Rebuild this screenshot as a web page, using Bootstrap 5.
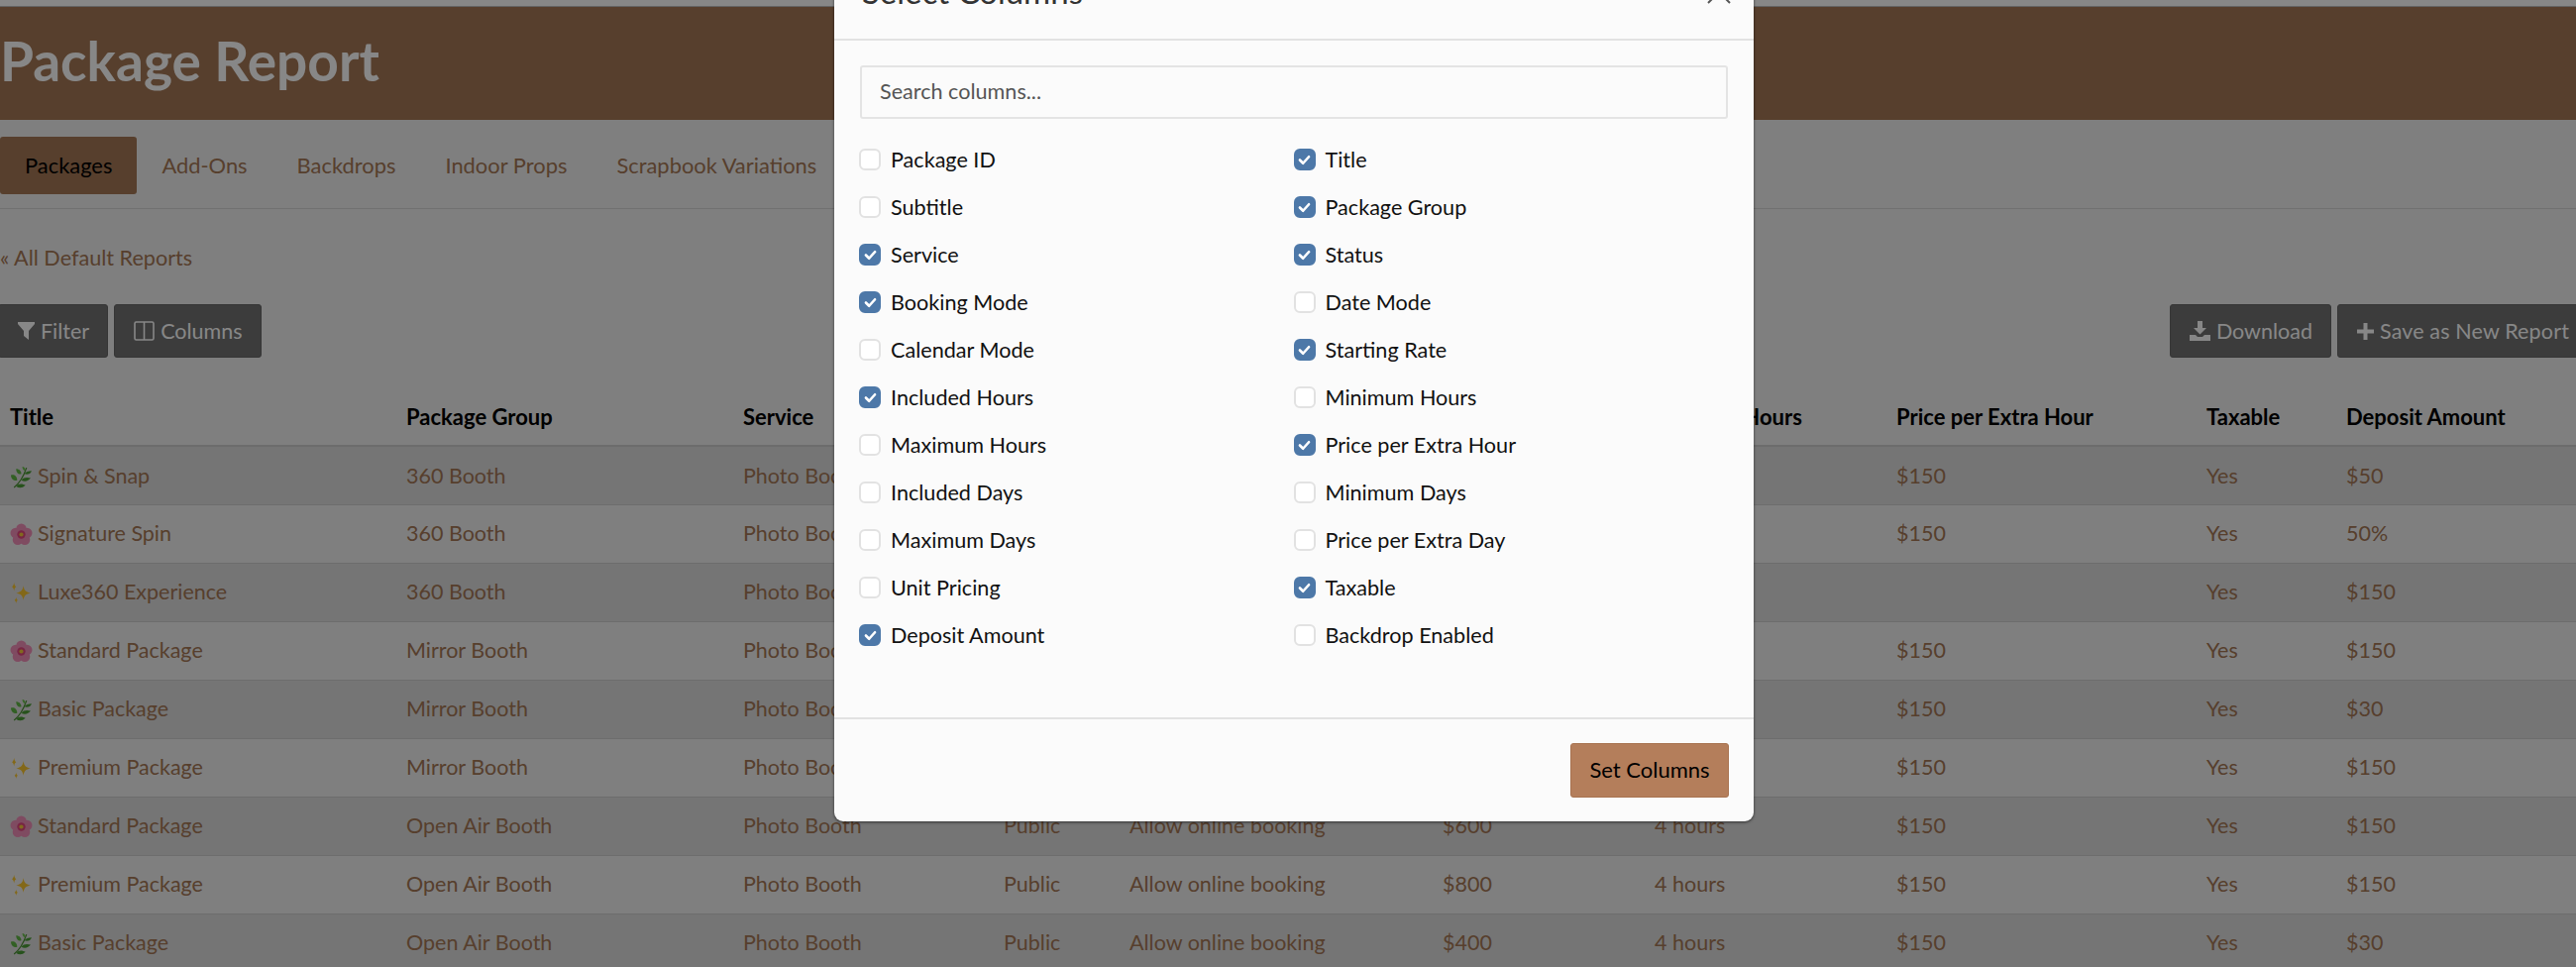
<!DOCTYPE html>
<html lang="en">

<head>
    <meta charset="UTF-8">
    <meta name="viewport" content="width=device-width, initial-scale=1.0">
    <title>Package Report</title>
    <link href="https://cdn.jsdelivr.net/npm/bootstrap@5.3.3/dist/css/bootstrap.min.css" rel="stylesheet">
    <script src="https://cdn.jsdelivr.net/npm/bootstrap@5.3.3/dist/js/bootstrap.bundle.min.js"></script>

    <style>
        html, body {
            height: 976px;
            overflow: hidden;
        }

        body {
            background-color: #f0f0f0;
            font-family: "Lato", "Liberation Sans", sans-serif;
            font-size: 21.6px;
            color: #a47755;
            padding-top: 6px;
            position: relative;
        }

        .top-strip {
            position: absolute;
            left: 0;
            right: 0;
            top: 0;
            height: 6px;
            background-color: #fff;
        }

        .report-band {
            background-color: #a47755;
            height: 115px;
            border-top: 1px solid #bbb;
        }

        .report-title {
            color: #fff;
            font-size: 55px;
            font-weight: 700;
            line-height: 108px;
            margin: 0;
        }

        .report-tabs {
            height: 90px;
            border-bottom: 1px solid #d6d6d6;
            padding-top: 17px;
        }

        .report-tabs .nav-link {
            height: 58px;
            padding: 0 25px;
            line-height: 58px;
            font-size: 21.9px;
            color: #a47755;
            border-radius: 3px;
        }

        .report-tabs .nav-link.active {
            background-color: #a47755;
            color: #000;
        }

        .back-link {
            display: block;
            color: #a47755;
            text-decoration: none;
            height: 96px;
            line-height: 98px;
        }

        .report-tools {
            margin: 0 -13px 0 -2px;
            height: 54px;
        }

        .tool-group {
            display: flex;
            gap: 6px;
        }

        .tool-btn {
            background-color: #717171;
            border: 1px solid #666;
            color: #fff;
            height: 54px;
            border-radius: 3px;
            font-size: 21.5px;
            padding: 0 18px 0 19px;
            display: flex;
            align-items: center;
            gap: 6px;
        }

        .tool-btn-wide {
            padding: 0 19px;
            letter-spacing: .15px;
        }

        .report-table {
            table-layout: fixed;
            width: 2600px;
            margin: 29px 0 0;
            --bs-table-bg: transparent;
            --bs-table-color: #a47755;
            --bs-table-striped-color: #a47755;
            --bs-table-striped-bg: rgba(0, 0, 0, .08);
            --bs-table-border-color: #cfcfcf;
        }

        .report-table th {
            color: #000;
            font-size: 22px;
            font-weight: 700;
            height: 60px;
            padding: 2px 10px 0;
            vertical-align: middle;
            border-bottom: 2px solid #cdcdcd;
        }

        .report-table td {
            height: 59px;
            padding: 0 10px;
            vertical-align: middle;
            white-space: nowrap;
            font-size: 21.5px;
        }

        .report-table th:nth-child(1) { width: 400px; }
        .report-table th:nth-child(2) { width: 340px; }
        .report-table th:nth-child(3) { width: 263px; }
        .report-table th:nth-child(4) { width: 127px; }
        .report-table th:nth-child(5) { width: 316px; }
        .report-table th:nth-child(6) { width: 214px; }
        .report-table th:nth-child(7) { width: 244px; }
        .report-table th:nth-child(8) { width: 313px; }
        .report-table th:nth-child(9) { width: 141px; }

        .emoji-icon {
            width: 23px;
            height: 23px;
            margin-right: 5px;
            vertical-align: -5px;
        }

        .dim-layer {
            position: absolute;
            inset: 0;
            background-color: #000;
            opacity: .47;
        }

        .columns-dialog {
            position: absolute;
            left: 842px;
            top: -34px;
            width: 928px;
            height: 863px;
            background-color: #fbfbfb;
            border-radius: 9px;
            box-shadow: 0 1px 3px rgba(0, 0, 0, .6);
            color: #111;
            display: flex;
            flex-direction: column;
        }

        .dialog-head {
            height: 75px;
            border-bottom: 2px solid #e2e2e2;
            padding: 5px 23px 0 28px;
            flex-shrink: 0;
        }

        .dialog-title {
            font-size: 33px;
            line-height: 40px;
            font-weight: 400;
            color: #333;
            margin: 0;
        }

        .dialog-close {
            padding: 0;
            border: 0;
            background: none;
            margin-top: 2px;
            display: block;
        }

        .dialog-body {
            padding: 25px 26px 0;
            flex-grow: 1;
        }

        .column-search {
            height: 54px;
            border: 2px solid #e4e4e4;
            border-radius: 3px;
            font-size: 21.6px;
            line-height: 50px;
            padding: 0 18px 2px;
            background-color: #fbfbfb;
            margin-bottom: 17px;
        }

        .column-search::placeholder {
            color: #555;
        }

        .column-list {
            margin-left: -1px;
        }

        .column-item {
            height: 48px;
            display: flex;
            align-items: center;
            gap: 10px;
            margin: 0;
            padding: 0;
        }

        .column-item .form-check-input {
            width: 22px;
            height: 22px;
            margin: 0;
            border: 2px solid #e2e2e2;
            border-radius: 6px;
            background-color: #fff;
            float: none;
            flex-shrink: 0;
        }

        .column-item .form-check-input:checked {
            background-color: #4d78a8;
            border-color: #4d78a8;
            background-size: 13px;
            --bs-form-check-bg-image: url("data:image/svg+xml,%3csvg xmlns='http://www.w3.org/2000/svg' viewBox='0 0 20 20'%3e%3cpath fill='none' stroke='%23fff' stroke-linecap='round' stroke-linejoin='round' stroke-width='4' d='m3 10 5 5 9-10'/%3e%3c/svg%3e");
        }

        .column-item .form-check-label {
            color: #111;
        }

        .dialog-foot {
            height: 105px;
            border-top: 2px solid #e2e2e2;
            padding: 0 25px;
            flex-shrink: 0;
        }

        .set-columns-btn {
            background-color: #b47e5b;
            border: 1px solid #a87350;
            color: #000;
            font-size: 22px;
            width: 160px;
            height: 55px;
            padding: 0 0 2px;
            border-radius: 3px;
        }
    </style>
</head>

<body>

    <svg width="0" height="0" class="d-none">
        <symbol id="ico-herb" viewBox="0 0 22 22">
            <path d="M4 21C9 17 13 11 16 2" fill="none" stroke="#4a8f33" stroke-width="1.200" />
            <path d="M1 9c3-1 6 1 6 5-3 1-6-1-6-5z" fill="#5fb544" />
            <path d="M6 3c3 0 5 2 5 5-3 1-5-2-5-5z" fill="#5fb544" />
            <path d="M12 1c2 0 3 2 3 4-2 0-3-2-3-4z" fill="#6cc04e" />
            <path d="M6 20c2-3 6-3 9-1-3 3-6 3-9 1z" fill="#4a9c36" />
            <path d="M11 14c2-3 6-3 9-2-2 3-6 4-9 2z" fill="#4a9c36" />
            <path d="M14 8c1-2 4-3 7-3-1 3-4 4-7 3z" fill="#4a9c36" />
        </symbol>
        <symbol id="ico-blossom" viewBox="0 0 22 22">
            <g fill="#f08fb8">
                <circle cx="11" cy="5.500" r="5" />
                <circle cx="16.500" cy="9.500" r="5" />
                <circle cx="14.400" cy="16" r="5" />
                <circle cx="7.600" cy="16" r="5" />
                <circle cx="5.500" cy="9.500" r="5" />
            </g>
            <circle cx="11" cy="11" r="4" fill="#e0487f" />
            <circle cx="11" cy="11" r="2" fill="#f6c63c" />
        </symbol>
        <symbol id="ico-sparkle" viewBox="0 0 22 22">
            <path d="M13 4c.7 4.300 2.200 6 7 7-4.800 1-6.300 2.700-7 7-.7-4.300-2.200-6-7-7 4.800-1 6.300-2.700 7-7z" fill="#f7c52e" />
            <path d="M4 1c.3 2.200.8 3 2 4-1.200 1-1.700 1.800-2 4-.3-2.200-.8-3-2-4 1.200-1 1.700-1.800 2-4z" fill="#f7c52e" />
            <path d="M6 15c.2 1.500.6 2 1.500 3-.9 1-1.300 1.500-1.500 3-.2-1.500-.6-2-1.500-3 .9-1 1.300-1.500 1.500-3z" fill="#f7c52e" />
        </symbol>
    </svg>

    <!-- Page under the dialog -->
    <div class="top-strip"></div>
    <header class="report-band">
        <h1 class="report-title">Package Report</h1>
    </header>

    <ul class="nav report-tabs">
        <li class="nav-item"><a class="nav-link active" href="#">Packages</a></li>
        <li class="nav-item"><a class="nav-link" href="#">Add-Ons</a></li>
        <li class="nav-item"><a class="nav-link" href="#">Backdrops</a></li>
        <li class="nav-item"><a class="nav-link" href="#">Indoor Props</a></li>
        <li class="nav-item"><a class="nav-link" href="#">Scrapbook Variations</a></li>
    </ul>

    <a class="back-link" href="#">« All Default Reports</a>

    <div class="d-flex justify-content-between report-tools">
        <div class="tool-group">
            <button class="tool-btn" type="button">
                <svg width="17" height="18" viewBox="0 0 17 18"><path d="M0 0h17v2l-6 7v9l-5-4V9L0 2z" fill="#fff" /></svg>
                Filter
            </button>
            <button class="tool-btn" type="button">
                <svg width="21" height="20" viewBox="0 0 21 20"><path d="M2.500 1h16A1.500 1.500 0 0 1 20 2.500v15a1.500 1.500 0 0 1-1.500 1.500h-16A1.500 1.500 0 0 1 1 17.500v-15A1.500 1.500 0 0 1 2.500 1zM10.500 1v18" fill="none" stroke="#fff" stroke-width="1.600" /></svg>
                Columns
            </button>
        </div>
        <div class="tool-group">
            <button class="tool-btn" type="button">
                <svg width="21" height="20" viewBox="0 0 21 20"><path d="M8 0h5v7h4l-6.500 6.500L4 7h4zM0 14h6l2 2h5l2-2h6v6H0z" fill="#fff" /></svg>
                Download
            </button>
            <button class="tool-btn tool-btn-wide" type="button">
                <svg width="17" height="17" viewBox="0 0 17 17"><path d="M6.500 0h4v6.500H17v4h-6.500V17h-4v-6.500H0v-4h6.500z" fill="#fff" /></svg>
                Save as New Report
            </button>
        </div>
    </div>

    <table class="table table-striped report-table">
        <thead>
            <tr>
                <th>Title</th>
                <th>Package Group</th>
                <th>Service</th>
                <th>Status</th>
                <th>Booking Mode</th>
                <th>Starting Rate</th>
                <th>Included Hours</th>
                <th>Price per Extra Hour</th>
                <th>Taxable</th>
                <th>Deposit Amount</th>
            </tr>
        </thead>
        <tbody id="report-rows"></tbody>
    </table>

    <!-- Select Columns dialog -->
    <div class="dim-layer"></div>
    <div class="columns-dialog">
        <div class="dialog-head d-flex justify-content-between align-items-start">
            <h5 class="dialog-title">Select Columns</h5>
            <button class="dialog-close" type="button" aria-label="Close">
                <svg width="24" height="24" viewBox="0 0 24 24"><path d="M1 1l22 22M23 1L1 23" fill="none" stroke="#555" stroke-width="2" /></svg>
            </button>
        </div>
        <div class="dialog-body">
            <input class="form-control column-search" type="text" placeholder="Search columns...">
            <div class="row row-cols-2 g-0 column-list" id="column-list"></div>
        </div>
        <div class="dialog-foot d-flex justify-content-end align-items-center">
            <button class="btn set-columns-btn" type="button">Set Columns</button>
        </div>
    </div>

    <script>
        const rows = [
            ['herb', 'Spin & Snap', '360 Booth', '$500', '2 hours', '$150', '$50'],
            ['blossom', 'Signature Spin', '360 Booth', '$700', '3 hours', '$150', '50%'],
            ['sparkle', 'Luxe360 Experience', '360 Booth', '$900', '4 hours', '', '$150'],
            ['blossom', 'Standard Package', 'Mirror Booth', '$600', '4 hours', '$150', '$150'],
            ['herb', 'Basic Package', 'Mirror Booth', '$400', '4 hours', '$150', '$30'],
            ['sparkle', 'Premium Package', 'Mirror Booth', '$800', '4 hours', '$150', '$150'],
            ['blossom', 'Standard Package', 'Open Air Booth', '$600', '4 hours', '$150', '$150'],
            ['sparkle', 'Premium Package', 'Open Air Booth', '$800', '4 hours', '$150', '$150'],
            ['herb', 'Basic Package', 'Open Air Booth', '$400', '4 hours', '$150', '$30']
        ];

        document.getElementById('report-rows').innerHTML = rows.map(r => `
            <tr>
                <td><svg class="emoji-icon"><use href="#ico-${r[0]}" /></svg>${r[1].replace('&', '&amp;')}</td>
                <td>${r[2]}</td>
                <td>Photo Booth</td>
                <td>Public</td>
                <td>Allow online booking</td>
                <td>${r[3]}</td>
                <td>${r[4]}</td>
                <td>${r[5]}</td>
                <td>Yes</td>
                <td>${r[6]}</td>
            </tr>`).join('');

        // name, checked - listed row by row, left column first
        const columns = [
            ['Package ID', 0], ['Title', 1],
            ['Subtitle', 0], ['Package Group', 1],
            ['Service', 1], ['Status', 1],
            ['Booking Mode', 1], ['Date Mode', 0],
            ['Calendar Mode', 0], ['Starting Rate', 1],
            ['Included Hours', 1], ['Minimum Hours', 0],
            ['Maximum Hours', 0], ['Price per Extra Hour', 1],
            ['Included Days', 0], ['Minimum Days', 0],
            ['Maximum Days', 0], ['Price per Extra Day', 0],
            ['Unit Pricing', 0], ['Taxable', 1],
            ['Deposit Amount', 1], ['Backdrop Enabled', 0]
        ];

        document.getElementById('column-list').innerHTML = columns.map((c, i) => `
            <div class="col">
                <div class="form-check column-item">
                    <input class="form-check-input" type="checkbox" id="col-${i}" ${c[1] ? 'checked' : ''}>
                    <label class="form-check-label" for="col-${i}">${c[0]}</label>
                </div>
            </div>`).join('');
    </script>

</body>

</html>
